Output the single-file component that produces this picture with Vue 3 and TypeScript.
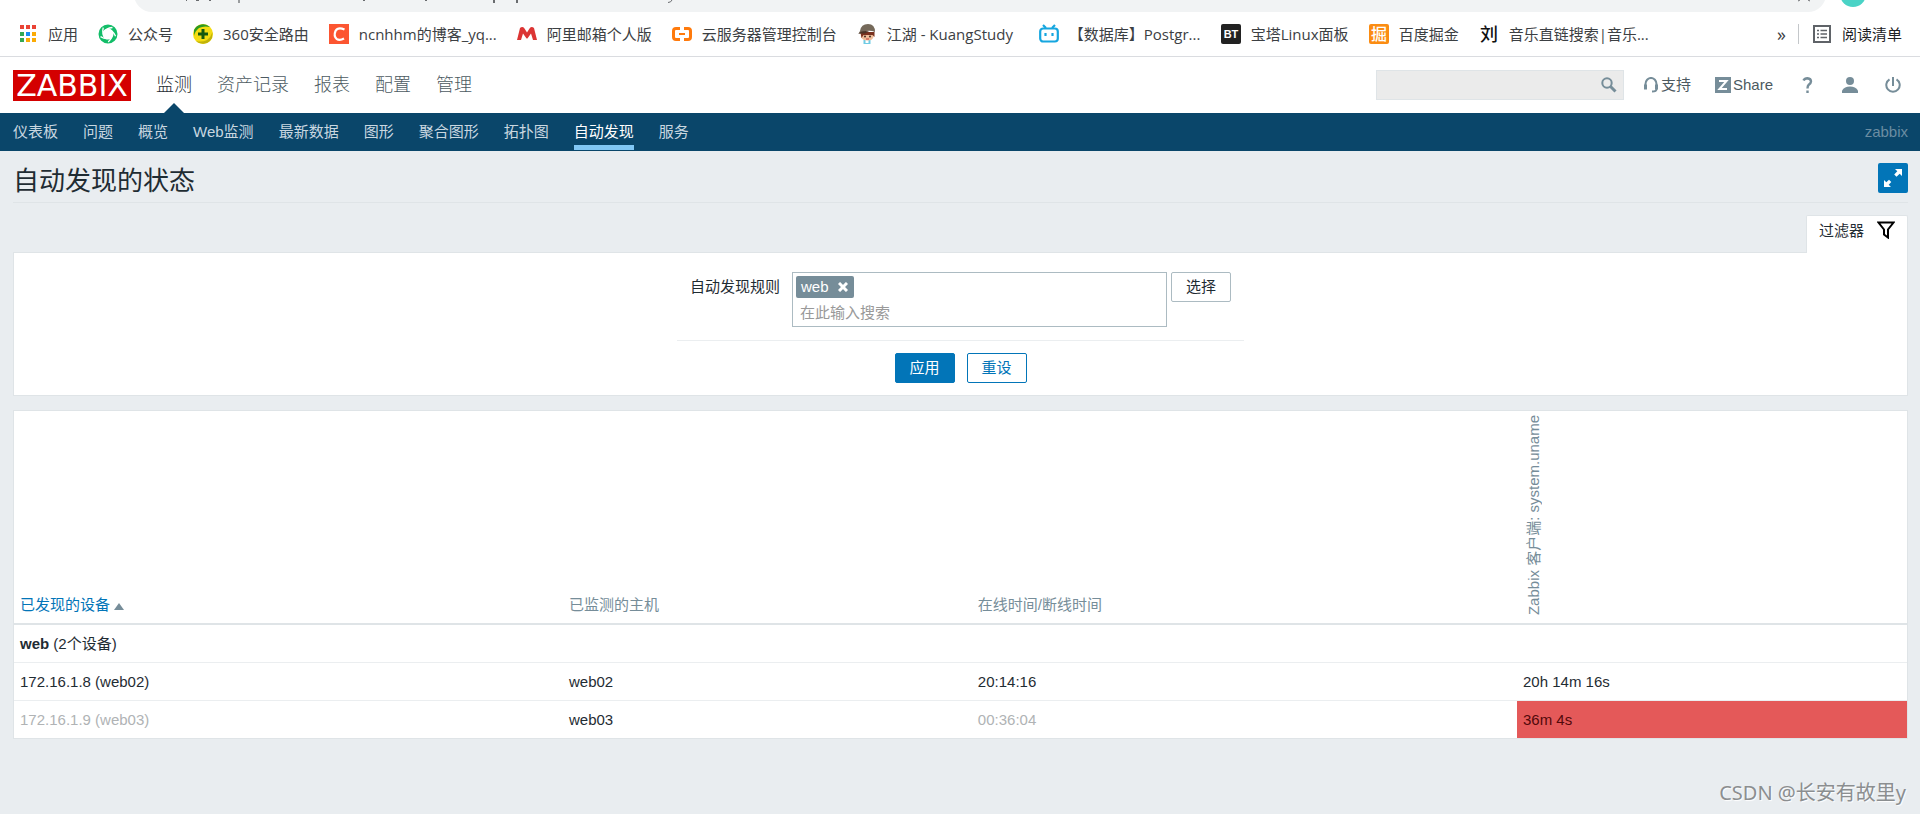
<script setup lang="ts">
import { ref } from 'vue'

interface Bookmark {
  icon: string
  title: string
}

interface Device {
  name: string
  host: string
  uptime: string
  service: string
  down: boolean
}

const bookmarks: Bookmark[] = [
  { icon: 'apps', title: '应用' },
  { icon: 'wechat', title: '公众号' },
  { icon: 'router', title: '360安全路由' },
  { icon: 'csdn', title: 'ncnhhm的博客_yq...' },
  { icon: 'mail', title: '阿里邮箱个人版' },
  { icon: 'aliyun', title: '云服务器管理控制台' },
  { icon: 'kuang', title: '江湖 - KuangStudy' },
  { icon: 'bili', title: '【数据库】Postgr...' },
  { icon: 'bt', title: '宝塔Linux面板' },
  { icon: 'juejin', title: '百度掘金' },
  { icon: 'liu', title: '音乐直链搜索|音乐...' }
]

const mainMenu: string[] = ['监测', '资产记录', '报表', '配置', '管理']
const subMenu: string[] = [
  '仪表板', '问题', '概览', 'Web监测', '最新数据', '图形', '聚合图形', '拓扑图', '自动发现', '服务'
]

const devices: Device[] = [
  { name: '172.16.1.8 (web02)', host: 'web02', uptime: '20:14:16', service: '20h 14m 16s', down: false },
  { name: '172.16.1.9 (web03)', host: 'web03', uptime: '00:36:04', service: '36m 4s', down: true }
]

const rules = ref<string[]>(['web'])
const ruleQuery = ref('')
const search = ref('')

function removeRule(rule: string): void {
  rules.value = rules.value.filter((r) => r !== rule)
}
</script>

<template>
  <div class="page">
    <div class="browser">
      <div class="omnibox-row">
        <div class="omnibox">
          <svg width="560" height="12" viewBox="0 0 560 12">
            <path d="M52 0h1v1h-1zM62 0h3v1h-3zM75 0h2v1h-2zM229 0h2v1h-2zM291 0h2v1h-2zM359 0h2v3h-2zM382 0h2v3h-2z" fill="#6a6c6f" />
            <path d="M104 0h2v3h-2z" fill="#9a9c9e" />
            <path d="M538 0Q537 2.500 534 2.500" fill="none" stroke="#6a6c6f" />
          </svg>
          <svg width="14" height="12" viewBox="0 0 14 12"><path d="M1 1l2-1M13 1l-2-1" stroke="#6a6c6f" /></svg>
        </div>
        <span class="avatar"></span>
      </div>
      <nav class="bookmarks" aria-label="书签">
        <a v-for="b in bookmarks" :key="b.title" href="#" class="bookmark" :class="b.icon">
          <svg v-if="b.icon === 'apps'" class="fav" viewBox="0 0 20 20">
            <path fill="#ea4335" d="M2 1h4v4H2zM8 1h4v4H8zM14 1h4v4h-4z" />
            <path fill="#34a853" d="M2 8h4v4H2zM2 14h4v4H2z" />
            <path fill="#1a8cf0" d="M8 8h4v4H8z" />
            <path fill="#fbab05" d="M14 8h4v4h-4zM8 14h4v4H8zM14 14h4v4h-4z" />
          </svg>
          <svg v-else-if="b.icon === 'wechat'" class="fav" viewBox="0 0 20 20" fill="none">
            <circle cx="10" cy="10" r="7.500" stroke="#12bd68" stroke-width="4" />
            <g stroke="#fff" stroke-width="1.300">
              <path d="M5.500 9Q8 4 14.500 3.500" />
              <path d="M5.500 9Q8 4 14.500 3.500" transform="rotate(72 10 10)" />
              <path d="M5.500 9Q8 4 14.500 3.500" transform="rotate(144 10 10)" />
              <path d="M5.500 9Q8 4 14.500 3.500" transform="rotate(216 10 10)" />
              <path d="M5.500 9Q8 4 14.500 3.500" transform="rotate(288 10 10)" />
            </g>
          </svg>
          <svg v-else-if="b.icon === 'router'" class="fav" viewBox="0 0 20 20">
            <circle cx="10" cy="10" r="10" fill="#f4dc12" />
            <path d="M1 6 A10 10 0 0 1 17 3 Q11 1.500 6 4 Q2 7 1 12z" fill="#2b9a22" />
            <path d="M19 14 A10 10 0 0 1 3 17 Q9 18.500 14 16 Q18 13 19.500 8z" fill="#c0b30a" />
            <path d="M8.500 5h3v3.500H15v3h-3.500V15h-3v-3.500H5v-3h3.500z" fill="#14580f" />
          </svg>
          <svg v-else-if="b.icon === 'csdn'" class="fav" viewBox="0 0 20 20">
            <path d="M0 0h20v20H0z" fill="#fc5531" />
            <path d="M15.500 5.500 Q9 2.500 6.500 7 Q4.500 12 7.500 14.800 Q10.500 17 15 14.500" fill="none" stroke="#fff" stroke-width="2.200" />
          </svg>
          <svg v-else-if="b.icon === 'mail'" class="fav" viewBox="0 0 20 20">
            <path d="M0 16 L3 4 Q5.500 2 7.500 4.500 L10 8.500 L12.500 4.500 Q14.500 2 17 4 L20 16 H16 L14 9.500 L10.800 14 Q10 15 9.200 14 L6 9.500 L4 16z" fill="#dc3534" />
          </svg>
          <svg v-else-if="b.icon === 'aliyun'" class="fav" viewBox="0 0 20 20" fill="none" stroke="#ff7a0c" stroke-width="3">
            <path d="M8 4.500H4Q1.500 4.500 1.500 7v6q0 2.500 2.500 2.500h4M12 4.500h4q2.500 0 2.500 2.500v6q0 2.500-2.500 2.500h-4" />
            <path d="M7 10h6" stroke-width="2" />
          </svg>
          <svg v-else-if="b.icon === 'kuang'" class="fav" viewBox="0 0 20 20">
            <path d="M6.500 16h7v4h-7z" fill="#6fcbe4" />
            <path d="M8.500 16h3v3h-3z" fill="#fff" />
            <path d="M3.500 9h13.500l-.500 4q-1 3.500-6 3.500T4 13z" fill="#efbd99" />
            <path d="M3.500 8h14v5l-2-2H6.500l-2 3z" fill="#7a321f" />
            <path d="M3 7Q4 0 11 0q7 0 7 8-4-2-9-1l-6 3-1-1z" fill="#75695a" />
            <path d="M1 9.500q5-3.500 11-2L8 9.500z" fill="#4b3427" />
            <circle cx="8" cy="12.500" r="1" fill="#442c22" /><circle cx="13" cy="12.500" r="1" fill="#442c22" />
            <path d="M9 15h3" stroke="#c4403a" />
          </svg>
          <svg v-else-if="b.icon === 'bili'" class="fav" viewBox="0 0 20 20" fill="none" stroke="#16a6df" stroke-width="2.200">
            <rect x="1.200" y="4.500" width="17.600" height="13" rx="3" />
            <path d="M4 1l3 3M16 1l-3 3M6.500 9v3M13.500 9v3" />
          </svg>
          <svg v-else-if="b.icon === 'bt'" class="fav" viewBox="0 0 20 20">
            <rect width="20" height="20" rx="2" fill="#222" />
            <text x="10" y="14" text-anchor="middle" class="fav-bt">BT</text>
          </svg>
          <svg v-else-if="b.icon === 'juejin'" class="fav" viewBox="0 0 20 20">
            <rect width="20" height="20" rx="2" fill="#fb8c12" />
            <text x="10" y="16" text-anchor="middle" class="fav-jue">掘</text>
          </svg>
          <svg v-else class="fav" viewBox="0 0 20 20">
            <text x="10" y="17" text-anchor="middle" class="fav-liu">刘</text>
          </svg>
          <span>{{ b.title }}</span>
        </a>
        <div class="bookmarks-end">
          <button type="button" class="more" aria-label="更多书签">»</button>
          <span class="divider"></span>
          <a href="#" class="bookmark reading">
            <svg class="fav" viewBox="0 0 20 20" fill="none" stroke="#5f6368" stroke-width="2">
              <path d="M2 2h16v16H2z" />
              <path d="M5 6.500h2M5 10h2M5 13.500h2M8.500 6.500H15M8.500 10H15M8.500 13.500H15" stroke-width="1.600" />
            </svg>
            <span>阅读清单</span>
          </a>
        </div>
      </nav>
    </div>

    <header class="topbar">
      <a href="#" class="logo">ZABBIX</a>
      <nav class="main-menu" aria-label="主菜单">
        <a v-for="(m, i) in mainMenu" :key="m" href="#" :class="{ selected: i === 0 }">{{ m }}</a>
      </nav>
      <div class="tools">
        <form class="search" role="search" @submit.prevent>
          <input v-model="search" type="text" aria-label="搜索" />
          <button type="submit" aria-label="搜索">
            <svg viewBox="0 0 16 16" fill="none" stroke="#768d99"><circle cx="6" cy="6" r="4.700" stroke-width="2" /><path d="M9.500 9.500l5 5" stroke-width="3" /></svg>
          </button>
        </form>
        <a href="#" class="tool support">
          <svg viewBox="0 0 16 16" fill="none" stroke="#768d99" stroke-width="2"><path d="M2.500 10V7a5 5.500 0 0 1 11 0v5q0 2.500-4.500 2.500" /><path d="M2.500 7.500v5M13.500 7.500v5" stroke-width="3" /></svg>
          <span>支持</span>
        </a>
        <a href="#" class="tool share">
          <svg viewBox="0 0 16 16"><path d="M0 0h16v16H0z" fill="#768d99" /><path d="M4 4h7.500L4.500 12H12" fill="none" stroke="#fff" stroke-width="2" /></svg>
          <span>Share</span>
        </a>
        <a href="#" class="tool help" aria-label="帮助">
          <svg viewBox="0 0 16 16" fill="none" stroke="#768d99" stroke-width="2.400"><path d="M4.500 3.500Q5.500 1.200 8.500 1.200 12 1.500 12 4.500 12 6 9.800 7.700 8.500 9 8.500 11.500" /><path d="M8.500 13.500V16" /></svg>
        </a>
        <a href="#" class="tool user" aria-label="用户">
          <svg viewBox="0 0 16 16" fill="#768d99"><circle cx="8" cy="4" r="4" /><path d="M0 16v-2.500Q2.500 9.500 8 9.500t8 4V16z" /></svg>
        </a>
        <a href="#" class="tool power" aria-label="退出">
          <svg viewBox="0 0 16 16" fill="none" stroke="#768d99" stroke-width="2"><path d="M8 0v9M4.500 2.300a6.700 6.700 0 1 0 7 0" /></svg>
        </a>
      </div>
    </header>

    <nav class="sub-menu" aria-label="监测">
      <a v-for="s in subMenu" :key="s" href="#" :class="{ selected: s === '自动发现' }">{{ s }}</a>
      <span class="server">zabbix</span>
    </nav>

    <main class="content">
      <div class="title-row">
        <h1>自动发现的状态</h1>
        <button type="button" class="fullscreen" aria-label="全屏">
          <svg viewBox="0 0 20 20" fill="#fff"><path d="M12 1h7v7l-2.300-2.300-3.200 3.100-2.300-2.300 3.100-3.200z" /><path d="M1 19v-7l2.300 2.300 2.700-2.600 2.300 2.300-2.600 2.700L8 19z" /></svg>
        </button>
      </div>

      <div class="filter-tab-row">
        <button type="button" class="filter-tab">
          <span>过滤器</span>
          <svg viewBox="0 0 18 18" fill="none" stroke="#000" stroke-width="2"><path d="M1.500 1.500h15L11 8.500v8l-4-3v-5z" /></svg>
        </button>
      </div>

      <form class="filter" @submit.prevent>
        <div class="filter-row">
          <label for="rules">自动发现规则</label>
          <div class="multiselect">
            <span v-for="r in rules" :key="r" class="tag">
              {{ r }}
              <button type="button" :aria-label="'移除 ' + r" @click="removeRule(r)">
                <svg viewBox="0 0 10 10" stroke="#fff" stroke-width="3"><path d="M1 1l8 8M9 1l-8 8" /></svg>
              </button>
            </span>
            <input id="rules" v-model="ruleQuery" type="text" placeholder="在此输入搜索" />
          </div>
          <button type="button" class="btn grey">选择</button>
        </div>
        <div class="filter-actions">
          <button type="submit" class="btn primary">应用</button>
          <button type="reset" class="btn outline">重设</button>
        </div>
      </form>

      <div class="table-box">
        <table>
          <colgroup><col class="c1" /><col class="c2" /><col class="c3" /><col class="c4" /></colgroup>
          <thead>
            <tr>
              <th scope="col"><a href="#">已发现的设备<span class="arrow"></span></a></th>
              <th scope="col">已监测的主机</th>
              <th scope="col">在线时间/断线时间</th>
              <th scope="col" class="rotated"><span>Zabbix 客户端: system.uname</span></th>
            </tr>
          </thead>
          <tbody>
            <tr>
              <td colspan="4"><b>web</b> (2个设备)</td>
            </tr>
            <tr v-for="d in devices" :key="d.host">
              <td :class="{ disabled: d.down }">{{ d.name }}</td>
              <td>{{ d.host }}</td>
              <td :class="{ disabled: d.down }">{{ d.uptime }}</td>
              <td :class="{ inactive: d.down }">{{ d.service }}</td>
            </tr>
          </tbody>
        </table>
      </div>
    </main>
    <div class="watermark">CSDN @长安有故里y</div>
  </div>
</template>

<style>
body {
  background: #e9edf0;
}
</style>

<style scoped>
* {
  box-sizing: border-box;
}

.page {
  position: relative;
  min-height: 100vh;
  background: #e9edf0;
  color: #1f2c33;
  font: 400 15px/20px "Liberation Sans", "Noto Sans CJK SC", sans-serif;
}

a {
  color: inherit;
  text-decoration: none;
}

button,
input {
  font: inherit;
  color: inherit;
}

button {
  cursor: pointer;
}

svg {
  display: block;
  flex: none;
}

.browser {
  background: #fff;
  border-bottom: 1px solid #dadce0;
}

.omnibox-row {
  display: flex;
  height: 12px;
  padding: 0 54px 0 134px;
  overflow: hidden;
}

.omnibox {
  display: flex;
  flex: 1;
  justify-content: space-between;
  height: 36px;
  margin-top: -24px;
  padding: 24px 15px 0 0;
  background: #f1f3f4;
  border-radius: 18px;
}

.avatar {
  width: 26px;
  height: 26px;
  margin: -19px 0 0 14px;
  border-radius: 50%;
  background: #4ad3c6;
}

.bookmarks {
  display: flex;
  align-items: center;
  gap: 20px;
  height: 44px;
  padding: 0 18px;
  color: #3c4043;
  font-family: "Open Sans", "Noto Sans CJK SC", sans-serif;
  white-space: nowrap;
}

.bookmark {
  display: flex;
  align-items: center;
  gap: 10px;
}

.kuang span,
.bili span {
  min-width: 132px;
}

.fav {
  width: 20px;
  height: 20px;
  overflow: visible;
}

.fav-bt {
  font: 700 11px "Liberation Sans", sans-serif;
  fill: #fff;
}

.fav-jue {
  font: 500 16px "Noto Sans CJK SC", sans-serif;
  fill: #fff;
}

.fav-liu {
  font: 500 18px "Noto Sans CJK SC", sans-serif;
  fill: #111;
}

.bookmarks-end {
  display: flex;
  align-items: center;
  margin-left: auto;
}

.more {
  padding: 0;
  border: 0;
  background: none;
  font-size: 18px;
}

.divider {
  width: 1px;
  height: 20px;
  margin: 0 13px 0 12px;
  background: #c4c7ca;
}

.reading {
  color: #202124;
}

.topbar {
  display: flex;
  align-items: center;
  height: 56px;
  padding: 0 12px 0 13px;
  background: #fff;
}

.logo {
  width: 118px;
  height: 31px;
  background: #d40000;
  color: #fff;
  font: 400 30px/31px "DejaVu Sans", sans-serif;
  text-align: center;
}

.main-menu {
  display: flex;
  gap: 25px;
  align-self: stretch;
  margin-left: 25px;
  color: #4c5a61;
  font-size: 18px;
  font-weight: 300;
  line-height: 56px;
}

.main-menu .selected {
  position: relative;
  color: #1f2c33;
}

.main-menu .selected::after {
  content: "";
  position: absolute;
  bottom: 0;
  left: 8px;
  border: 10px solid transparent;
  border-top: 0;
  border-bottom-color: #0a466a;
}

.tools {
  display: flex;
  align-items: center;
  margin-left: auto;
  color: #4c5a61;
}

.search {
  display: flex;
  align-items: center;
  width: 248px;
  height: 30px;
  margin-right: 19px;
  padding-right: 6px;
  border: 1px solid #dfe4e7;
  background: #ebebeb;
}

.search input {
  flex: 1;
  min-width: 0;
  border: 0;
  background: none;
  outline: 0;
}

.search button {
  padding: 0;
  border: 0;
  background: none;
}

.search svg,
.tool svg {
  width: 16px;
  height: 16px;
}

.tool {
  display: flex;
  align-items: center;
  gap: 2px;
}

.share {
  margin-left: 24px;
}

.help {
  margin-left: 26px;
}

.user,
.power {
  margin-left: 27px;
}

.power {
  margin-right: 7px;
}

.sub-menu {
  display: flex;
  gap: 25px;
  height: 38px;
  padding: 0 12px 0 13px;
  background: #0a466a;
  color: #c9d7e0;
  line-height: 37px;
}

.sub-menu .selected {
  height: 37px;
  border-bottom: 5px solid #81c7f5;
  color: #fff;
}

.server {
  margin-left: auto;
  color: #6b8da2;
}

.content {
  padding: 0 12px 0 13px;
}

.title-row {
  display: flex;
  justify-content: space-between;
  height: 52px;
  padding-top: 12px;
  border-bottom: 1px solid #dfe4e7;
}

h1 {
  margin: 0;
  font-size: 26px;
  font-weight: 400;
  line-height: 36px;
}

.fullscreen {
  display: flex;
  align-items: center;
  justify-content: center;
  width: 30px;
  height: 30px;
  padding: 0;
  border: 0;
  border-radius: 2px;
  background: #0275b8;
}

.fullscreen svg {
  width: 20px;
  height: 20px;
}

.filter-tab-row {
  display: flex;
  justify-content: flex-end;
  margin-top: 12px;
}

.filter-tab {
  position: relative;
  display: flex;
  gap: 13px;
  height: 38px;
  margin-bottom: -1px;
  padding: 5px 12px;
  border: 1px solid #dfe4e7;
  border-bottom: 0;
  border-radius: 2px 2px 0 0;
  background: #fff;
}

.filter-tab svg {
  width: 18px;
  height: 18px;
}

.filter {
  display: flex;
  flex-direction: column;
  align-items: center;
  padding: 19px 0 12px;
  border: 1px solid #dfe4e7;
  background: #fff;
}

.filter-row {
  display: flex;
  align-items: flex-start;
  padding: 0 13px 13px;
}

.filter-row label {
  margin-right: 12px;
  line-height: 30px;
}

.multiselect {
  width: 375px;
  height: 55px;
  margin-right: 4px;
  padding: 3px;
  border: 1px solid #acbbc2;
}

.tag {
  display: flex;
  align-items: center;
  gap: 9px;
  width: max-content;
  height: 22px;
  padding: 0 6px 0 5px;
  border-radius: 2px;
  background: #768d99;
  color: #fff;
}

.tag button {
  padding: 0;
  border: 0;
  background: none;
}

.tag svg {
  width: 10px;
  height: 10px;
}

.multiselect input {
  display: block;
  width: 100%;
  height: 24px;
  margin-top: 2px;
  padding: 0 4px;
  border: 0;
  outline: 0;
  background: none;
}

.multiselect input::placeholder {
  color: #999;
}

.btn {
  width: 60px;
  height: 30px;
  padding: 0;
  border: 1px solid #0275b8;
  border-radius: 2px;
  background: #fff;
  color: #0275b8;
}

.btn.grey {
  border-color: #acbbc2;
  color: #1f2c33;
}

.btn.primary {
  background: #0275b8;
  color: #fff;
}

.filter-actions {
  display: flex;
  justify-content: center;
  gap: 12px;
  width: 567px;
  padding-top: 12px;
  border-top: 1px solid #ebeef0;
}

.table-box {
  margin-top: 14px;
  border: 1px solid #dfe4e7;
  background: #fff;
}

table {
  width: 100%;
  table-layout: fixed;
  border-collapse: separate;
  border-spacing: 0;
}

.c1 {
  width: 29%;
}

.c2 {
  width: 21.6%;
}

.c3 {
  width: 28.8%;
}

th,
td {
  padding: 8px 6px;
  border-bottom: 1px solid #ebeef0;
  text-align: left;
  line-height: 21px;
}

tbody tr:last-child td {
  border-bottom: 0;
}

th {
  height: 214px;
  border-bottom: 2px solid #dfe4e7;
  color: #768d99;
  font-weight: 400;
  vertical-align: bottom;
}

th a {
  color: #0275b8;
}

.arrow {
  display: inline-block;
  margin-left: 4px;
  border: 5px solid transparent;
  border-top: 0;
  border-bottom: 7px solid #768d99;
}

.rotated {
  padding-top: 4px;
}

.rotated span {
  display: block;
  writing-mode: vertical-rl;
  text-orientation: sideways;
  white-space: nowrap;
  transform: rotate(180deg);
}

b {
  font-weight: 700;
}

.disabled {
  color: #b0b3b5;
}

.inactive {
  background: #e45959;
  color: #52090b;
}

.watermark {
  position: absolute;
  right: 14px;
  bottom: 7px;
  color: #8b8e90;
  font: 400 20px/28px "Noto Sans", "Noto Sans CJK SC", sans-serif;
  text-shadow: 1px 1px 1px #fff;
}
</style>
